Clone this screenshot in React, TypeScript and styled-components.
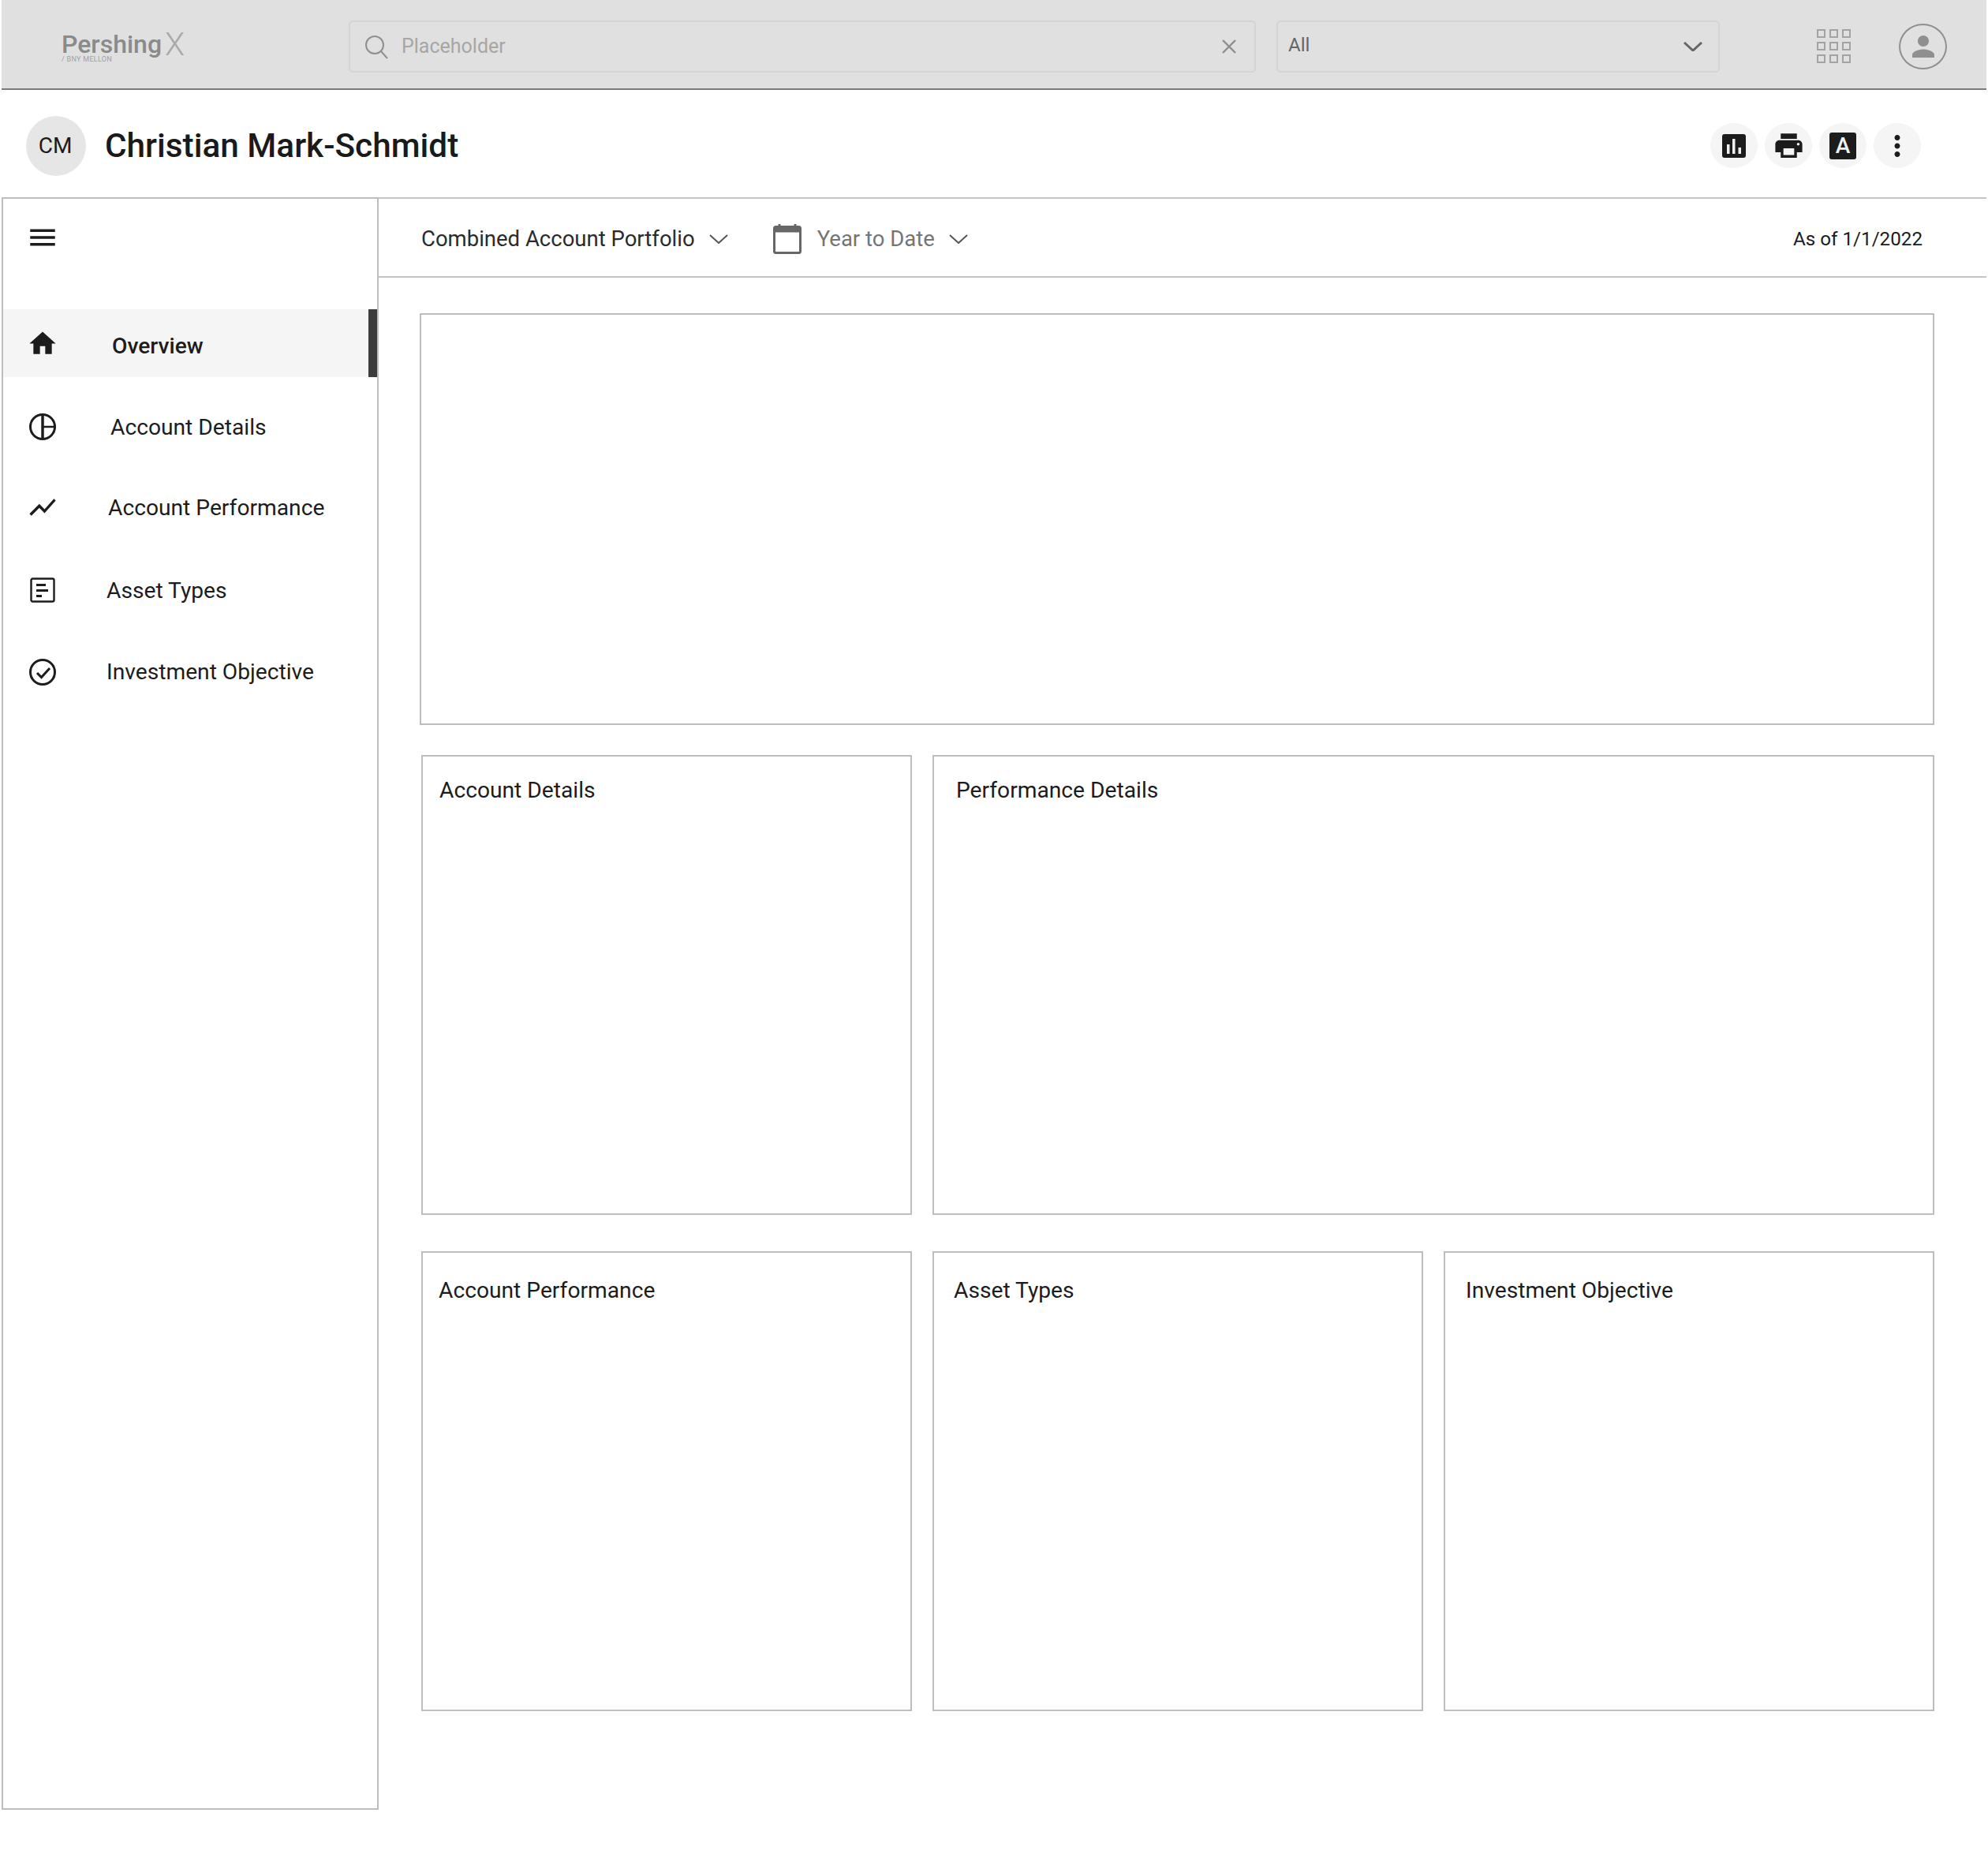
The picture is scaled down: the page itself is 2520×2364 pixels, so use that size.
import React from 'react'
import styled, {createGlobalStyle} from 'styled-components'
import {MdHome, MdMenu, MdMoreVert, MdPrint, MdShowChart, MdPerson} from 'react-icons/md'

const GlobalStyle = createGlobalStyle`
  html, body {
    margin: 0;
    padding: 0;
    background: #fff;
  }

  body {
    font-family: Roboto, "Liberation Sans", sans-serif;
    color: #1c1c1c;
  }
`

const Page = styled.div`
  width: 2518px;
  height: 2364px;
  overflow: hidden;
`

const TopBar = styled.header`
  box-sizing: border-box;
  display: flex;
  align-items: center;
  height: 114px;
  margin-left: 2px;
  padding: 5px 50px 0 76px;
  background: #e0e0e0;
  border-bottom: 2px solid #7a7a7a;
`

const Logo = styled.div`
  display: flex;
  flex-direction: column;
  width: 364px;
  color: #8a8a8a;
`

const LogoMark = styled.div`
  display: flex;
  align-items: center;
  height: 36px;
  font-size: 32px;
  font-weight: 500;
`

const LogoX = styled.span`
  margin-left: 4px;
  font-size: 41px;
  font-weight: 300;
  color: #a8a8a8;
  line-height: 36px;
`

const LogoSub = styled.span`
  margin-top: -3px;
  font-size: 9px;
  line-height: 9px;
  letter-spacing: 0.3px;
  color: #a0a0a0;
`

const Field = styled.div<{$width: number}>`
  box-sizing: border-box;
  display: flex;
  align-items: center;
  width: ${props => props.$width}px;
  height: 66px;
  border: 2px solid #d4d4d4;
  border-radius: 5px;
`

const SearchField = styled(Field)`
  padding: 0 22px 0 18px;
`

const SelectField = styled(Field)`
  margin-left: 26px;
  padding: 0 20px 0 13px;
`

const Placeholder = styled.span`
  flex: 1;
  margin-left: 17px;
  font-size: 25px;
  color: #a6a6a6;
`

const SelectValue = styled.span`
  flex: 1;
  padding-bottom: 3px;
  font-size: 24px;
  color: #666;
`

const SelectChevron = styled.span`
  display: flex;
  color: #666;
`

const TopActions = styled.div`
  display: flex;
  align-items: center;
  gap: 61px;
  margin-left: auto;
`

const GridIcon = styled.div`
  display: grid;
  grid-template-columns: repeat(3, 11px);
  grid-auto-rows: 11px;
  gap: 5px;
`

const GridCell = styled.span`
  border: 2px solid #a3a3a3;
`

const UserCircle = styled.div`
  box-sizing: border-box;
  display: flex;
  align-items: center;
  justify-content: center;
  width: 61px;
  height: 58px;
  border: 2px solid #8f8f8f;
  border-radius: 50%;
  color: #8f8f8f;
`

const ClientHeader = styled.section`
  display: flex;
  align-items: center;
  height: 136px;
  padding: 5px 83px 0 33px;
  box-sizing: border-box;
`

const Initials = styled.div`
  box-sizing: border-box;
  display: flex;
  align-items: center;
  justify-content: center;
  width: 76px;
  height: 76px;
  padding-right: 2px;
  border-radius: 50%;
  background: #e6e6e6;
  font-size: 28px;
`

const ClientName = styled.h1`
  margin: 0 0 0 24px;
  font-size: 42.3px;
  font-weight: 500;
  color: #1a1a1a;
`

const HeaderActions = styled.div`
  display: flex;
  align-items: center;
  gap: 9px;
  margin-left: auto;
`

const RoundButton = styled.div`
  display: flex;
  align-items: center;
  justify-content: center;
  width: 60px;
  height: 57px;
  border-radius: 50%;
  background: #f5f5f5;
  color: #1c1c1c;
`

const LetterBadge = styled.span`
  display: flex;
  align-items: center;
  justify-content: center;
  width: 34px;
  height: 34px;
  border-radius: 3px;
  background: #1c1c1c;
  color: #f0f0f0;
  font-size: 28px;
  font-weight: 500;
`

const Workspace = styled.div`
  display: flex;
  align-items: flex-start;
  border-top: 2px solid #c4c4c4;
  margin-left: 2px;
`

const Sidebar = styled.nav`
  box-sizing: border-box;
  flex: none;
  width: 478px;
  height: 2044px;
  margin-top: -2px;
  border: 2px solid #bdbdbd;
  background: #fff;
`

const MenuButton = styled.div`
  display: flex;
  align-items: center;
  height: 98px;
  margin-bottom: 42px;
  padding-left: 29px;
  color: #1c1c1c;
`

const NavList = styled.ul`
  display: flex;
  flex-direction: column;
  margin: 0;
  padding: 0;
  list-style: none;
`

const NavRow = styled.li<{$active?: boolean; $height: number}>`
  position: relative;
  display: flex;
  align-items: center;
  height: ${props => props.$height}px;
  padding-left: 30px;
  background: ${props => (props.$active ? '#f5f5f5' : 'transparent')};
  font-size: 28.2px;
  font-weight: ${props => (props.$active ? 500 : 400)};
  color: #1c1c1c;

  &::after {
    content: '';
    display: ${props => (props.$active ? 'block' : 'none')};
    position: absolute;
    top: 0;
    right: 0;
    bottom: 0;
    width: 11px;
    background: #3c3c3c;
  }
`

const NavIcon = styled.span`
  display: flex;
  align-items: center;
  justify-content: center;
  flex: none;
  width: 40px;
  height: 40px;
`

const NavLabel = styled.span<{$indent: number; $drop?: number}>`
  margin-left: ${props => props.$indent}px;
  padding-top: ${props => props.$drop || 0}px;
`

const Main = styled.main`
  flex: 1;
  min-width: 0;
`

const Toolbar = styled.div`
  box-sizing: border-box;
  display: flex;
  align-items: center;
  height: 100px;
  padding: 3px 81px 0 54px;
  border-bottom: 2px solid #c4c4c4;
  font-size: 27.5px;
`

const ToolbarLabel = styled.span<{$muted?: boolean}>`
  color: ${props => (props.$muted ? '#757575' : '#2b2b2b')};
`

const ToolbarChevron = styled.span`
  display: flex;
  margin-left: 18px;
  color: #555;
`

const CalendarSlot = styled.span`
  display: flex;
  margin: 0 20px 0 57px;
`

const AsOf = styled.span`
  margin-left: auto;
  font-size: 24.2px;
  color: #1c1c1c;
`

const Panels = styled.div`
  display: flex;
  flex-direction: column;
  padding: 45px 66px 0 52px;
`

const BigPanel = styled.div`
  box-sizing: border-box;
  height: 522px;
  border: 2px solid #bdbdbd;
`

const CardRow = styled.div<{$top: number; $columns: string}>`
  display: grid;
  grid-template-columns: ${props => props.$columns};
  column-gap: 26px;
  justify-content: space-between;
  margin-top: ${props => props.$top}px;
  margin-left: 2px;
`

const Card = styled.div<{$pad: number; $titleTop: number}>`
  box-sizing: border-box;
  height: 583px;
  padding: ${props => props.$titleTop}px 0 0 ${props => props.$pad}px;
  border: 2px solid #bdbdbd;
  font-size: 28.2px;
  line-height: 36px;
  color: #1c1c1c;
`

const Chevron = ({size, width = 2}: {size: number; width?: number}) => (
  <svg width={size} height={size * 0.5} viewBox="0 0 24 12" fill="none" stroke="currentColor" strokeWidth={width}>
    <path d="M1 1l11 10L23 1" />
  </svg>
)

const SearchGlyph = () => (
  <svg width="30" height="32" viewBox="0 0 30 32" fill="none" stroke="#8f8f8f" strokeWidth="2">
    <circle cx="13" cy="14" r="11" />
    <path d="M21 22l8 9" />
  </svg>
)

const CloseGlyph = () => (
  <svg width="20" height="20" viewBox="0 0 20 20" fill="none" stroke="#8c8c8c" strokeWidth="2.4">
    <path d="M2 2l16 16M18 2L2 18" />
  </svg>
)

const CalendarGlyph = () => (
  <svg width="36" height="38" viewBox="0 0 36 38" fill="none">
    <path d="M8 0v5M28 0v5" stroke="#666" strokeWidth="3" />
    <rect x="1.5" y="3.5" width="33" height="33" rx="2" stroke="#666" strokeWidth="3" />
    <rect x="1.5" y="3.5" width="33" height="7" fill="#666" />
  </svg>
)

const ChartBadge = () => (
  <svg width="30" height="30" viewBox="0 0 30 30">
    <rect width="30" height="30" rx="3" fill="#1c1c1c" />
    <path d="M6 13h3.500v12H6zM13 6h3.500v19H13zM20.500 17H24v8h-3.500z" fill="#f0f0f0" />
  </svg>
)

const PieGlyph = () => (
  <svg width="36" height="36" viewBox="0 0 36 36" fill="none" stroke="#1c1c1c" strokeWidth="3">
    <circle cx="18" cy="18" r="15.500" />
    <path d="M18 2v32" strokeWidth="3.500" />
    <path d="M18 18h16" strokeWidth="2.500" />
  </svg>
)

const ListGlyph = () => (
  <svg width="32" height="32" viewBox="0 0 32 32" fill="none">
    <rect x="1.500" y="1.500" width="29" height="29" rx="2" stroke="#1c1c1c" strokeWidth="2.400" />
    <path d="M8 8h12v3H8zM8 15h15v3H8zM8 22h7v3H8z" fill="#1c1c1c" />
  </svg>
)

const CheckGlyph = () => (
  <svg width="36" height="36" viewBox="0 0 36 36" fill="none" stroke="#1c1c1c" strokeWidth="3">
    <circle cx="18" cy="18" r="15.500" />
    <path d="M11 19l5.500 5.500L27 13" />
  </svg>
)

const navItems = [
  {label: 'Overview', icon: <MdHome size={41} />, height: 86, indent: 68, drop: 6, active: true},
  {label: 'Account Details', icon: <PieGlyph />, height: 126, indent: 66},
  {label: 'Account Performance', icon: <MdShowChart size={44} />, height: 78, indent: 63},
  {label: 'Asset Types', icon: <ListGlyph />, height: 132, indent: 61},
  {label: 'Investment Objective', icon: <CheckGlyph />, height: 75, indent: 61},
]

export default function App() {
  return (
    <Page>
      <GlobalStyle />
      <TopBar>
        <Logo>
          <LogoMark>
            Pershing<LogoX>X</LogoX>
          </LogoMark>
          <LogoSub>/ BNY MELLON</LogoSub>
        </Logo>
        <SearchField $width={1150}>
          <SearchGlyph />
          <Placeholder>Placeholder</Placeholder>
          <CloseGlyph />
        </SearchField>
        <SelectField $width={562}>
          <SelectValue>All</SelectValue>
          <SelectChevron>
            <Chevron size={24} width={3} />
          </SelectChevron>
        </SelectField>
        <TopActions>
          <GridIcon>
            {Array.from({length: 9}, (_, i) => (
              <GridCell key={i} />
            ))}
          </GridIcon>
          <UserCircle>
            <MdPerson size={42} />
          </UserCircle>
        </TopActions>
      </TopBar>

      <ClientHeader>
        <Initials>CM</Initials>
        <ClientName>Christian Mark-Schmidt</ClientName>
        <HeaderActions>
          <RoundButton>
            <ChartBadge />
          </RoundButton>
          <RoundButton>
            <MdPrint size={41} />
          </RoundButton>
          <RoundButton>
            <LetterBadge>A</LetterBadge>
          </RoundButton>
          <RoundButton>
            <MdMoreVert size={42} />
          </RoundButton>
        </HeaderActions>
      </ClientHeader>

      <Workspace>
        <Sidebar>
          <MenuButton>
            <MdMenu size={42} />
          </MenuButton>
          <NavList>
            {navItems.map(item => (
              <NavRow key={item.label} $active={item.active} $height={item.height}>
                <NavIcon>{item.icon}</NavIcon>
                <NavLabel $indent={item.indent} $drop={item.drop}>{item.label}</NavLabel>
              </NavRow>
            ))}
          </NavList>
        </Sidebar>

        <Main>
          <Toolbar>
            <ToolbarLabel>Combined Account Portfolio</ToolbarLabel>
            <ToolbarChevron>
              <Chevron size={24} />
            </ToolbarChevron>
            <CalendarSlot>
              <CalendarGlyph />
            </CalendarSlot>
            <ToolbarLabel $muted>Year to Date</ToolbarLabel>
            <ToolbarChevron>
              <Chevron size={24} />
            </ToolbarChevron>
            <AsOf>As of 1/1/2022</AsOf>
          </Toolbar>
          <Panels>
            <BigPanel />
            <CardRow $top={38} $columns="622px 1fr">
              <Card $pad={21} $titleTop={25}>Account Details</Card>
              <Card $pad={28} $titleTop={25}>Performance Details</Card>
            </CardRow>
            <CardRow $top={46} $columns="622px 622px 622px">
              <Card $pad={20} $titleTop={30}>Account Performance</Card>
              <Card $pad={25} $titleTop={30}>Asset Types</Card>
              <Card $pad={26} $titleTop={30}>Investment Objective</Card>
            </CardRow>
          </Panels>
        </Main>
      </Workspace>
    </Page>
  )
}
